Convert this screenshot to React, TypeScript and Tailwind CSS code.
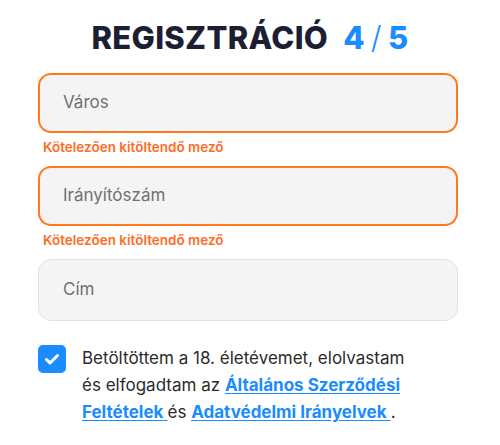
import React from "react";

function Field({ label, error }: { label: string; error?: boolean }) {
  return (
    <div className="flex flex-col">
      <div
        className={
          error
            ? "h-[60px] rounded-[13px] border-2 border-[#ff7a1f] bg-[#f4f4f4] flex items-center px-[23px]"
            : "h-[62px] rounded-[13px] border border-[#e3e3e3] bg-[#f4f4f4] flex items-center px-[24px]"
        }
      >
        <span className="text-[17px] text-[#707070]">{label}</span>
      </div>
      {error && (
        <p className="mt-[7px] ml-[5px] text-[13.5px] font-semibold text-[#ff6b1f] leading-[14px]">
          Kötelezően kitöltendő mező
        </p>
      )}
    </div>
  );
}

export default function App() {
  return (
    <div className="w-[500px] h-[445px] bg-white font-['Inter',sans-serif] overflow-hidden">
      <h1 className="pt-[19px] text-center font-extrabold text-[31px] leading-[38px] tracking-[0.3px] text-[#1c1f33]">
        REGISZTRÁCIÓ <span className="ml-[8px] text-[#1a8cff]">4</span>
        <span className="mx-[6px] font-light text-[#1a8cff]">/</span>
        <span className="text-[#1a8cff]">5</span>
      </h1>

      <div className="ml-[38px] w-[420px] mt-[16px] flex flex-col">
        <Field label="Város" error />
        <div className="h-[12px]" />
        <Field label="Irányítószám" error />
        <div className="h-[12px]" />
        <Field label="Cím" />

        <div className="mt-[24px] flex items-start gap-[16px]">
          <div className="w-[28px] h-[28px] shrink-0 rounded-[5px] bg-[#1a8cff] flex items-center justify-center">
            <svg width="20" height="20" viewBox="0 0 20 20" fill="none">
              <path d="M4.5 10.5l3.5 3.5L15.5 6.5" stroke="#ffffff" strokeWidth="3" strokeLinecap="round" strokeLinejoin="round" />
            </svg>
          </div>
          <p className="flex-1 text-[17px] leading-[27px] text-[#2b2b2b]">
            Betöltöttem a 18. életévemet, elolvastam
            <br />
            és elfogadtam az{" "}
            <a className="font-bold text-[#1a8cff] underline underline-offset-2">
              Általános Szerződési
              <br />
              Feltételek{" "}
            </a>
            és <a className="font-bold text-[#1a8cff] underline underline-offset-2">Adatvédelmi Irányelvek </a> .
          </p>
        </div>
      </div>
    </div>
  );
}
